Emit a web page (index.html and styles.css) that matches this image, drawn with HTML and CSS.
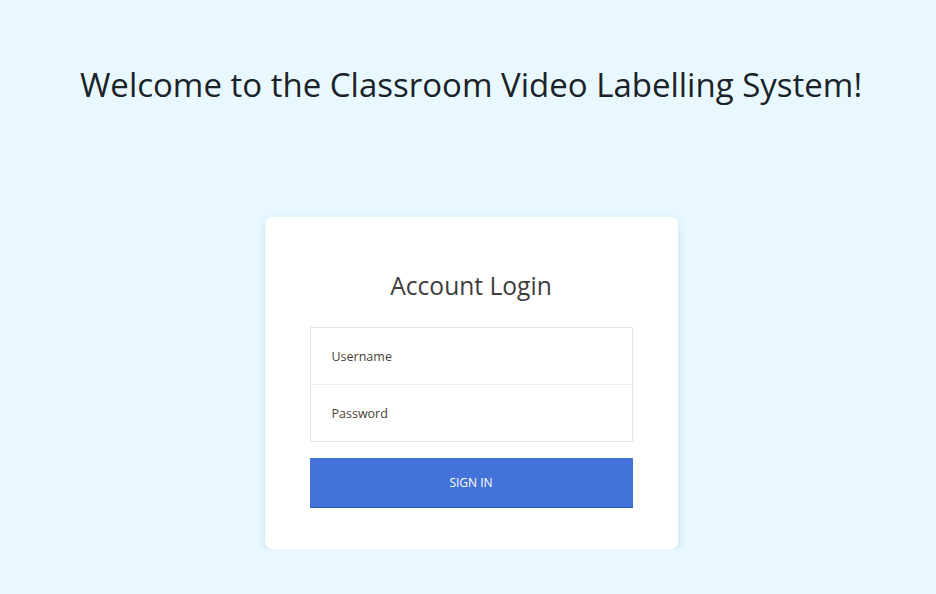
FILE: index.html
```html
<!DOCTYPE html>
<html>
<head>
<meta charset="utf-8">
<link rel="stylesheet" href="styles.css">
</head>
<body>
<div class="page">
  <h1 class="welcome">Welcome to the Classroom Video Labelling System!</h1>
  <div class="card">
    <h2 class="card-title">Account Login</h2>
    <div class="fields">
      <input class="field" type="text" placeholder="Username">
      <input class="field" type="password" placeholder="Password">
    </div>
    <button class="signin">SIGN IN</button>
  </div>
</div>
</body>
</html>
```
FILE: styles.css
```css
html, body {
  margin: 0;
  padding: 0;
  background: #e8f8fe;
  font-family: "Open Sans", "Liberation Sans", sans-serif;
}
.page {
  display: flex;
  flex-direction: column;
  align-items: center;
  padding-top: 62px;
  padding-left: 6px;
}
.welcome {
  margin: 0;
  font-size: 33px;
  font-weight: 400;
  color: #1b2329;
  line-height: 46px;
}
.card {
  margin-top: 109px;
  width: 413px;
  box-sizing: border-box;
  background: #fff;
  border-radius: 7px;
  box-shadow: 0 3px 9px rgba(120, 160, 180, 0.28);
  padding: 52px 45px 41px;
  display: flex;
  flex-direction: column;
}
.card-title {
  margin: 0 0 24px;
  text-align: center;
  font-size: 24.6px;
  font-weight: 400;
  color: #3d3d3d;
  line-height: 34px;
}
.fields {
  border: 1px solid #e6e6e6;
  display: flex;
  flex-direction: column;
}
.field {
  height: 56px;
  border: none;
  padding: 0 21px;
  font-family: "Open Sans", "Liberation Sans", sans-serif;
  font-size: 12.5px;
  outline: none;
  background: #fff;
}
.field + .field {
  border-top: 1px solid #ededed;
}
.field::placeholder {
  color: #4a3f36;
}
.signin {
  margin-top: 16px;
  height: 50px;
  border: none;
  border-bottom: 1px solid #2e5bbf;
  background: #4372d8;
  color: #fff;
  font-family: "Open Sans", "Liberation Sans", sans-serif;
  font-size: 12px;
}
```
